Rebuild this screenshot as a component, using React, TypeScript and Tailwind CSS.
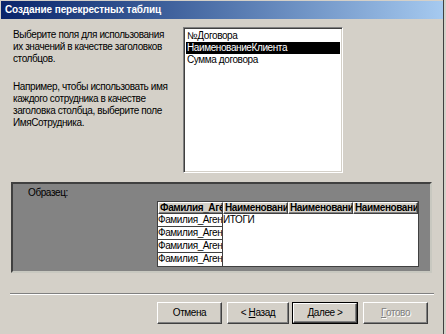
import React from 'react';

const raised =
  'border border-t-white border-l-white border-r-[#404040] border-b-[#404040] shadow-[inset_-1px_-1px_0_#808080]';

function Button({
  children,
  primary,
  disabled,
  w,
}: {
  children: React.ReactNode;
  primary?: boolean;
  disabled?: boolean;
  w: string;
}) {
  if (primary) {
    return (
      <div className={`${w} h-[22px] border border-black flex`}>
        <div className={`flex-1 flex items-center justify-center ${raised}`}>{children}</div>
      </div>
    );
  }
  return (
    <div
      className={`${w} h-[22px] flex items-center justify-center ${raised} ${
        disabled ? 'text-[#808080] [text-shadow:1px_1px_0_#fff]' : ''
      }`}
    >
      {children}
    </div>
  );
}

const fields = ['№Договора', 'НаименованиеКлиента', 'Сумма договора'];

export default function App() {
  return (
    <div className="w-[446px] h-[334px] bg-[#d4d0c8] text-black text-[10px] leading-[12px] tracking-[-0.4px] font-['Liberation_Sans',Arial,sans-serif] overflow-hidden">
      <div className="w-[444px] h-[334px] border-r border-r-[#404040] pt-[1px] pl-[1px] flex flex-col">
        {/* title bar */}
        <div className="h-[18px] w-[442px] bg-gradient-to-r from-[#0a246a] to-[#a6caf0] flex items-center pl-[4px]">
          <span className="text-white font-bold text-[10px] tracking-[-0.1px]">Создание перекрестных таблиц</span>
        </div>

        {/* top area */}
        <div className="flex pt-[8px]">
          <div className="w-[182px] pl-[12px] pt-[2px] flex flex-col gap-[16px] leading-[12px] whitespace-nowrap">
            <p>
              Выберите поля для использования
              <br />
              их значений в качестве заголовков
              <br />
              столбцов.
            </p>
            <p>
              Например, чтобы использовать имя
              <br />
              каждого сотрудника в качестве
              <br />
              заголовка столбца, выберите поле
              <br />
              ИмяСотрудника.
            </p>
          </div>
          <div className="w-[160px] h-[146px] bg-white border border-t-[#808080] border-l-[#808080] border-r-white border-b-white shadow-[inset_1px_1px_0_#404040,inset_-1px_-1px_0_#d4d0c8] p-[2px]">
            {fields.map((f, i) => (
              <div
                key={f}
                className={`h-[12px] leading-[12px] pl-[1px] whitespace-nowrap ${i === 1 ? 'bg-black text-white' : ''}`}
              >
                {f}
              </div>
            ))}
          </div>
        </div>

        {/* sample panel */}
        <div className="ml-[10px] mt-[9px] w-[421px] h-[91px] bg-[#838383] border-[2px] border-t-[#404040] border-l-[#404040] border-r-[#c8c8c0] border-b-[#c8c8c0] flex flex-col">
          <div className="pl-[15px] pt-[3px] h-[17px]">Образец:</div>
          <div className="ml-[144px] w-[262px] border border-[#404040] flex flex-col bg-white">
            <div className="flex h-[12px]">
              {['Фамилия_Агент', 'Наименование', 'Наименование', 'Наименование'].map((h, i) => (
                <div
                  key={i}
                  className={`w-[65px] bg-[#d4d0c8] ${raised} font-bold text-[10px] leading-[10px] pl-[1px] overflow-hidden whitespace-nowrap`}
                >
                  {h}
                </div>
              ))}
            </div>
            <div className="flex">
              <div className="w-[65px] flex flex-col">
                {[0, 1, 2, 3].map((r) => (
                  <div
                    key={r}
                    className="h-[13px] border-r border-b border-[#404040] last:border-b-0 leading-[12px] overflow-hidden whitespace-nowrap"
                  >
                    Фамилия_Агент
                  </div>
                ))}
              </div>
              <div className="flex-1 leading-[12px]">ИТОГИ</div>
            </div>
          </div>
        </div>

        {/* separator */}
        <div className="ml-[9px] mt-[20px] w-[424px] h-[2px] border-t border-t-[#808080] border-b border-b-white" />

        {/* buttons */}
        <div className="flex justify-end pr-[15px] mt-[7px]">
          <Button w="w-[65px]">Отмена</Button>
          <div className="w-[5px]" />
          <Button w="w-[62px]">
            &lt;&nbsp;<u>Н</u>азад
          </Button>
          <div className="w-[3px]" />
          <Button w="w-[66px]" primary>
            <u>Д</u>алее &gt;
          </Button>
          <div className="w-[5px]" />
          <Button w="w-[65px]" disabled>
            <u>Г</u>отово
          </Button>
        </div>
      </div>
    </div>
  );
}
